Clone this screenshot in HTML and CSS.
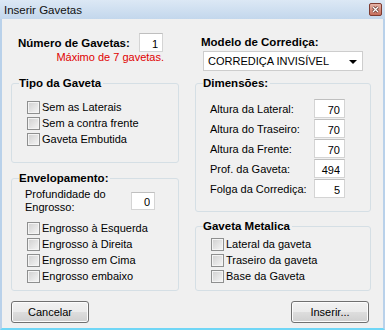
FILE: index.html
```html
<!DOCTYPE html>
<html lang="pt">
<head>
    <meta charset="UTF-8">
    <title>Inserir Gavetas</title>
    <link rel="stylesheet" href="styles.css">
</head>
<body>
    <div class="window">
        <div class="titlebar">
            <span class="title">Inserir Gavetas</span>
            <svg class="close" width="13" height="13" viewBox="0 0 13 13">
                <defs>
                    <linearGradient id="cg" x1="0" y1="0" x2="0" y2="1">
                        <stop offset="0" stop-color="#e7b7ab"/>
                        <stop offset="1" stop-color="#c56a58"/>
                    </linearGradient>
                </defs>
                <rect x="0.5" y="0.5" width="12" height="12" rx="1.5" fill="url(#cg)" stroke="#7e3b30"/>
                <path d="M4 4 L9 9 M9 4 L4 9" stroke="#5a2a22" stroke-width="2.6"/>
                <path d="M4 4 L9 9 M9 4 L4 9" stroke="#fff" stroke-width="1.3"/>
            </svg>
        </div>
        <div class="content">
            <div class="columns">
                <div class="col">
                    <div class="count">
                        <div class="count-row">
                            <span class="strong">Número de Gavetas:</span>
                            <input class="field num-gavetas" type="text" value="1">
                        </div>
                        <div class="hint">Máximo de 7 gavetas.</div>
                    </div>

                    <fieldset class="group tipo">
                        <legend>Tipo da Gaveta</legend>
                        <div class="checks">
                            <label class="check"><span class="box"></span>Sem as Laterais</label>
                            <label class="check"><span class="box"></span>Sem a contra frente</label>
                            <label class="check"><span class="box"></span>Gaveta Embutida</label>
                        </div>
                    </fieldset>

                    <fieldset class="group envelope">
                        <legend>Envelopamento:</legend>
                        <div class="depth">
                            <span class="depth-label">Profundidade do<br>Engrosso:</span>
                            <input class="field depth-field" type="text" value="0">
                        </div>
                        <div class="checks">
                            <label class="check"><span class="box"></span>Engrosso à Esquerda</label>
                            <label class="check"><span class="box"></span>Engrosso à Direita</label>
                            <label class="check"><span class="box"></span>Engrosso em Cima</label>
                            <label class="check"><span class="box"></span>Engrosso embaixo</label>
                        </div>
                    </fieldset>
                </div>

                <div class="col">
                    <div class="model">
                        <span class="strong">Modelo de Corrediça:</span>
                        <div class="select">
                            <span>CORREDIÇA INVISÍVEL</span>
                            <span class="arrow"></span>
                        </div>
                    </div>

                    <fieldset class="group dims">
                        <legend>Dimensões:</legend>
                        <div class="dim-rows">
                            <div class="dim-row"><span>Altura da Lateral:</span><input class="field dim" type="text" value="70"></div>
                            <div class="dim-row"><span>Altura do Traseiro:</span><input class="field dim" type="text" value="70"></div>
                            <div class="dim-row"><span>Altura da Frente:</span><input class="field dim" type="text" value="70"></div>
                            <div class="dim-row"><span>Prof. da Gaveta:</span><input class="field dim" type="text" value="494"></div>
                            <div class="dim-row"><span>Folga da Corrediça:</span><input class="field dim" type="text" value="5"></div>
                        </div>
                    </fieldset>

                    <fieldset class="group metal">
                        <legend>Gaveta Metalica</legend>
                        <div class="checks">
                            <label class="check"><span class="box"></span>Lateral da gaveta</label>
                            <label class="check"><span class="box"></span>Traseiro da gaveta</label>
                            <label class="check"><span class="box"></span>Base da Gaveta</label>
                        </div>
                    </fieldset>
                </div>
            </div>

            <div class="actions">
                <button class="btn">Cancelar</button>
                <button class="btn">Inserir...</button>
            </div>
        </div>
    </div>
</body>
</html>
```

FILE: styles.css
```css
body {
    margin: 0;
    padding: 0;
    font-family: "Liberation Sans", Arial, sans-serif;
    font-size: 11px;
    color: #000;
    background: #f0f0f0;
}

.window {
    width: 385px;
    height: 330px;
    box-sizing: border-box;
    border-left: 2px solid #b9d1ea;
    border-right: 2px solid #b9d1ea;
    border-bottom: 2px solid #6fd6f6;
    display: flex;
    flex-direction: column;
}

.titlebar {
    height: 19px;
    margin: 0 -2px;
    padding: 0 4px;
    display: flex;
    align-items: center;
    justify-content: space-between;
    background: linear-gradient(#dce8f5, #c3d7ec);
}

.title {
    font-size: 11.5px;
    color: #111;
}

.close {
    margin-right: -1px;
    margin-top: -1px;
}

.content {
    flex: 1;
    background: #f0f0f0;
    padding: 0 12px 0 9px;
}

.columns {
    display: grid;
    grid-template-columns: 168px 176px;
    column-gap: 16px;
}

.col {
    display: flex;
    flex-direction: column;
}

.strong {
    font-weight: bold;
    font-size: 11.5px;
}

.count {
    margin-top: 14px;
    margin-left: 7px;
    width: 145px;
}

.count-row {
    display: flex;
    align-items: center;
    justify-content: space-between;
    height: 19px;
}

.hint {
    color: #e00000;
    text-align: right;
    line-height: 11px;
    height: 11px;
    margin-right: -1px;
}

.field {
    box-sizing: border-box;
    height: 19px;
    border: 1px solid #d4d4d4;
    border-top-color: #bfbfbf;
    background: #fff;
    font-family: inherit;
    font-size: 11px;
    text-align: right;
    padding: 2px 4px 0 0;
    margin: 0;
    outline: none;
}

.num-gavetas {
    width: 24px;
}

.model {
    margin-top: 16px;
    padding-left: 6px;
    display: flex;
    flex-direction: column;
    gap: 2px;
}

.model .strong {
    line-height: 14px;
}

.select {
    box-sizing: border-box;
    margin-left: 2px;
    width: 160px;
    height: 20px;
    background: #fff;
    border: 1px solid #cdcdcd;
    display: flex;
    align-items: center;
    justify-content: space-between;
    padding: 0 5px 0 4px;
}

.arrow {
    width: 0;
    height: 0;
    border-left: 4px solid transparent;
    border-right: 4px solid transparent;
    border-top: 4px solid #000;
    margin-top: 1px;
}

.group {
    box-sizing: border-box;
    margin: 0;
    padding: 0 0 0 7px;
    min-width: 0;
    border: 1px solid #d5dfe5;
    border-radius: 3px;
}

.group legend {
    padding: 0 2px 0 0;
    font-weight: bold;
    font-size: 11.5px;
    line-height: 14px;
}

.tipo {
    margin-top: 13px;
    height: 87px;
}

.envelope {
    margin-top: 8px;
    height: 120px;
}

.dims {
    margin-top: 5px;
    height: 136px;
}

.metal {
    margin-top: 7px;
    height: 72px;
}

.checks {
    display: flex;
    flex-direction: column;
    padding-left: 8px;
}

.tipo .checks {
    margin-top: 9px;
}

.metal .checks {
    margin-top: 3px;
}

.check {
    display: flex;
    align-items: center;
    gap: 2px;
    height: 16px;
}

.box {
    width: 13px;
    height: 13px;
    box-sizing: border-box;
    border: 1px solid #8e8f8f;
    background: linear-gradient(135deg, #cfcfcf, #f6f6f6);
    box-shadow: inset 0 0 0 1px #f4f4f4;
}

.depth {
    display: flex;
    align-items: center;
    justify-content: space-between;
    padding: 3px 23px 0 6px;
    margin-bottom: 6px;
}

.depth-label {
    line-height: 13px;
}

.depth-field {
    width: 24px;
    height: 18px;
}

.dim-rows {
    display: flex;
    flex-direction: column;
    gap: 1px;
    padding: 9px 25px 0 7px;
}

.dim-row {
    display: flex;
    align-items: center;
    justify-content: space-between;
    height: 19px;
}

.dim {
    width: 31px;
}

.actions {
    display: flex;
    justify-content: space-between;
    margin-top: 10px;
    padding-right: 2px;
}

.btn {
    width: 78px;
    height: 22px;
    border: 1px solid #707070;
    border-radius: 3px;
    background: linear-gradient(#f2f2f2 0%, #ebebeb 48%, #dddddd 52%, #cfcfcf 100%);
    font-family: inherit;
    font-size: 11px;
    color: #000;
    padding: 0;
    box-shadow: inset 0 0 0 1px #fcfcfc;
}
```
